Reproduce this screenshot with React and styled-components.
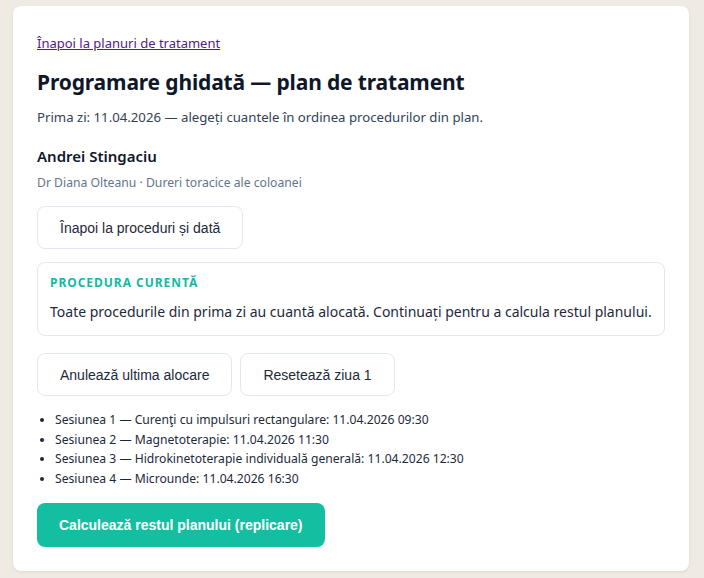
import React from 'react';
import styled, { createGlobalStyle } from 'styled-components';

const GlobalStyle = createGlobalStyle`
  html, body {
    margin: 0;
    padding: 0;
    background: #efebe3;
  }
  body {
    font-family: 'Noto Sans', 'Liberation Sans', sans-serif;
    color: #1e293b;
  }
`;

const sessions = [
  'Sesiunea 1 — Curenţi cu impulsuri rectangulare: 11.04.2026 09:30',
  'Sesiunea 2 — Magnetoterapie: 11.04.2026 11:30',
  'Sesiunea 3 — Hidrokinetoterapie individuală generală: 11.04.2026 12:30',
  'Sesiunea 4 — Microunde: 11.04.2026 16:30',
];

const App = () => {
  return (
    <Page>
      <GlobalStyle />
      <Card>
        <BackLink href='#'>Înapoi la planuri de tratament</BackLink>
        <Title>Programare ghidată — plan de tratament</Title>
        <Subtitle>
          Prima zi: 11.04.2026 — alegeți cuantele în ordinea procedurilor din plan.
        </Subtitle>
        <Patient>Andrei Stingaciu</Patient>
        <Meta>Dr Diana Olteanu · Dureri toracice ale coloanei</Meta>
        <BackButton>Înapoi la proceduri și dată</BackButton>
        <Panel>
          <PanelLabel>Procedura curentă</PanelLabel>
          <PanelText>
            Toate procedurile din prima zi au cuantă alocată. Continuați pentru a calcula
            restul planului.
          </PanelText>
        </Panel>
        <ButtonRow>
          <Button>Anulează ultima alocare</Button>
          <Button>Resetează ziua 1</Button>
        </ButtonRow>
        <SessionList>
          {sessions.map((s) => (
            <li key={s}>{s}</li>
          ))}
        </SessionList>
        <PrimaryButton>Calculează restul planului (replicare)</PrimaryButton>
      </Card>
    </Page>
  );
};

export default App;

const Page = styled.div`
  padding: 6px 15px 7px 13px;
`;

const Card = styled.div`
  background: #fff;
  border-radius: 8px;
  box-shadow: 0 1px 3px rgba(0, 0, 0, 0.08);
  padding: 28px 24px 24px;
  display: flex;
  flex-direction: column;
  align-items: flex-start;
`;

const BackLink = styled.a`
  font-size: 13px;
  color: #551a8b;
  text-decoration: underline;
  line-height: 18px;
`;

const Title = styled.h1`
  margin: 15px 0 0;
  font-size: 21px;
  letter-spacing: -0.15px;
  font-weight: 700;
  color: #0f172a;
  line-height: 30px;
`;

const Subtitle = styled.p`
  margin: 11px 0 0;
  font-size: 13.2px;
  color: #334155;
  line-height: 18px;
`;

const Patient = styled.div`
  margin-top: 20px;
  font-size: 15px;
  font-weight: 600;
  color: #0f172a;
  line-height: 20px;
`;

const Meta = styled.div`
  margin-top: 9px;
  font-size: 12.2px;
  color: #64748b;
  line-height: 16px;
`;

const Button = styled.button`
  font-family: 'Liberation Sans', Arial, sans-serif;
  font-size: 14px;
  color: #1e293b;
  background: #fff;
  border: 1px solid #e2e8f0;
  border-radius: 8px;
  height: 43px;
  padding: 0 22px;
  cursor: pointer;
`;

const BackButton = styled(Button)`
  margin-top: 15px;
`;

const ButtonRow = styled.div`
  display: flex;
  gap: 8px;
  margin-top: 17px;
`;

const Panel = styled.div`
  align-self: stretch;
  margin-top: 13px;
  border: 1px solid #e2e8f0;
  border-radius: 8px;
  padding: 12px 12px 13px;
`;

const PanelLabel = styled.div`
  font-size: 12px;
  font-weight: 700;
  letter-spacing: 0.08em;
  text-transform: uppercase;
  color: #14b8a6;
  line-height: 16px;
`;

const PanelText = styled.div`
  margin-top: 11px;
  font-size: 14px;
  color: #1e293b;
  line-height: 20px;
`;

const SessionList = styled.ul`
  margin: 14px 0 0;
  padding-left: 18px;
  font-size: 12.15px;
  color: #1e293b;
  line-height: 19.5px;
`;

const PrimaryButton = styled.button`
  margin-top: 15px;
  font-family: 'Liberation Sans', Arial, sans-serif;
  font-size: 14px;
  font-weight: 700;
  color: #fff;
  background: #13bfa0;
  border: none;
  border-radius: 8px;
  height: 44px;
  padding: 0 22px;
  cursor: pointer;
`;
